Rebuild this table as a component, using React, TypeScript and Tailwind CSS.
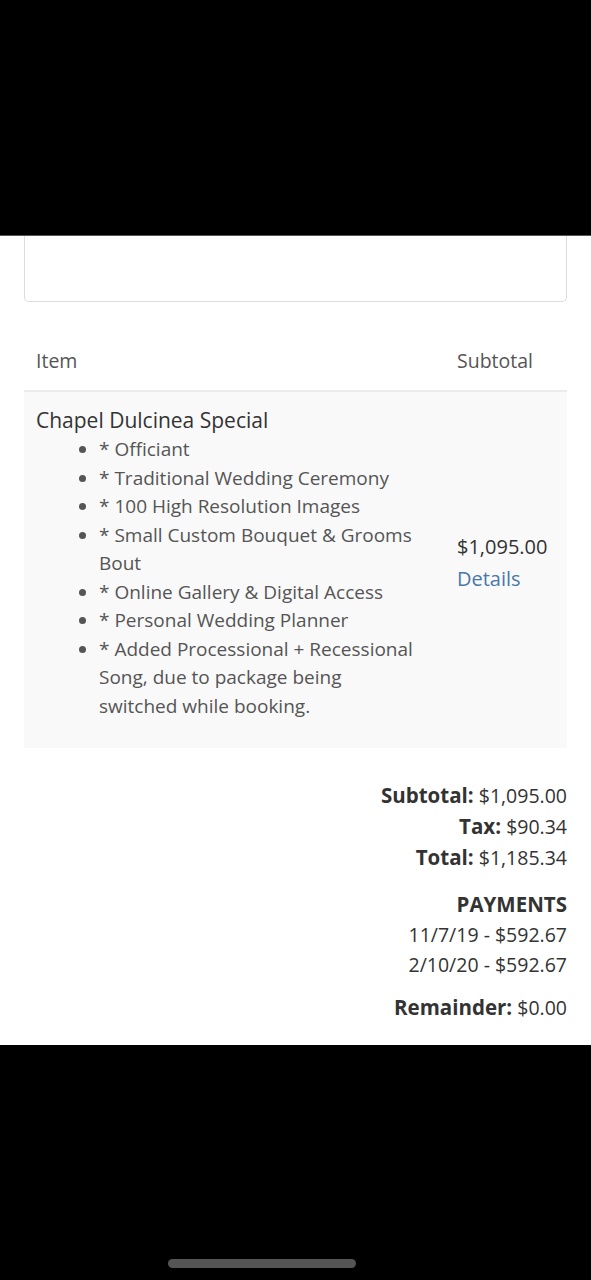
import React from "react";

export default function App() {
  const items = [
    "* Officiant",
    "* Traditional Wedding Ceremony",
    "* 100 High Resolution Images",
    "* Small Custom Bouquet & Grooms Bout",
    "* Online Gallery & Digital Access",
    "* Personal Wedding Planner",
    "* Added Processional + Recessional Song, due to package being switched while booking.",
  ];
  return (
    <div className="w-[591px] h-[1280px] bg-black flex flex-col" style={{ fontFamily: "'Open Sans', Lato, sans-serif" }}>
      <div className="h-[235px] shrink-0 bg-black" />
      <div className="bg-white h-[810px] shrink-0 px-[24px] border-t border-[#555]">
        <div className="h-[66px] border border-t-0 border-[#dcdcdc] rounded-b-[5px]" />
        <div className="mt-[28px] flex h-[62px] items-center border-b-2 border-[#ececec] text-[19.5px] text-[#555]">
          <div className="flex-1 pl-[12px] pt-[2px]">Item</div>
          <div className="w-[110px] pt-[2px]">Subtotal</div>
        </div>
        <div className="flex bg-[#f9f9f9] pt-[13px] pb-[28px]">
          <div className="flex-1 pl-[12px]">
            <div className="text-[21px] text-[#333] leading-[30px]">Chapel Dulcinea Special</div>
            <ul className="list-disc pl-[63px] pr-[38px] text-[19px] leading-[28.5px] text-[#555]">
              {items.map((t) => (
                <li key={t} className="marker:text-[#555]">{t}</li>
              ))}
            </ul>
          </div>
          <div className="w-[110px] flex flex-col justify-center text-[20px] leading-[32px]">
            <div className="text-[#333]">$1,095.00</div>
            <div className="text-[#4a78a8]">Details</div>
          </div>
        </div>
        <div className="mt-[32px] flex flex-col items-end text-[19.5px] text-[#333]">
          <div className="leading-[31px]"><span className="font-bold text-[20.5px]">Subtotal:</span> $1,095.00</div>
          <div className="leading-[31px]"><span className="font-bold text-[20.5px]">Tax:</span> $90.34</div>
          <div className="leading-[31px]"><span className="font-bold text-[20.5px]">Total:</span> $1,185.34</div>
          <div className="leading-[31px] mt-[16px] font-bold text-[20.5px]">PAYMENTS</div>
          <div className="leading-[30px]">11/7/19 - $592.67</div>
          <div className="leading-[30px]">2/10/20 - $592.67</div>
          <div className="leading-[31px] mt-[12px]"><span className="font-bold text-[20.5px]">Remainder:</span> $0.00</div>
        </div>
      </div>
      <div className="flex-1 flex items-end pl-[168px] pb-[12px]">
        <div className="w-[188px] h-[9px] rounded-full bg-[#555]" />
      </div>
    </div>
  );
}
